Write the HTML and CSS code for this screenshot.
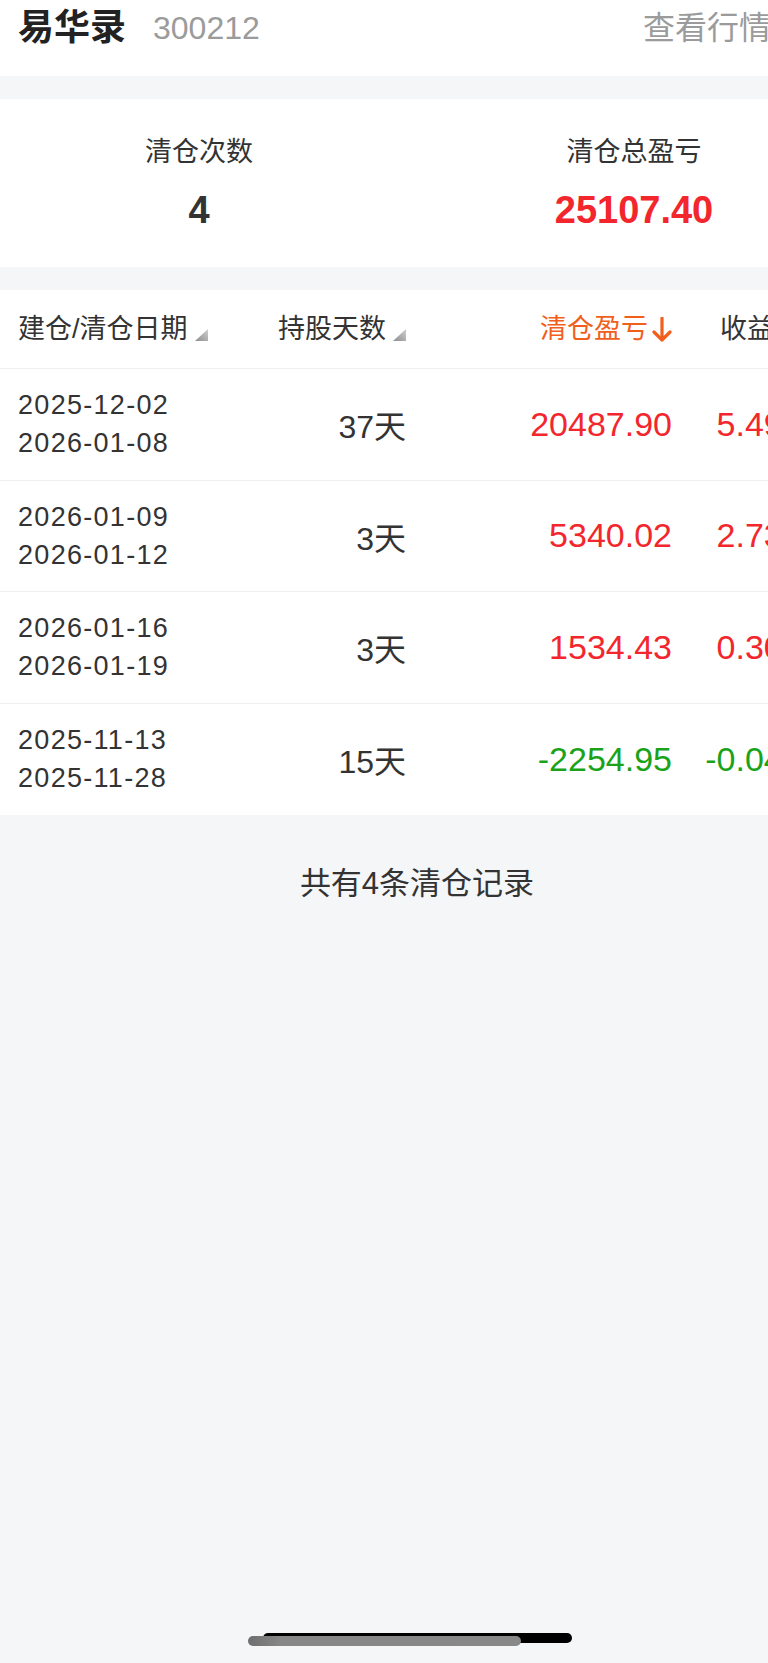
FILE: index.html
```html
<!DOCTYPE html>
<html>
<head>
	<title>清仓记录</title>
	<meta charset="utf-8">
	<link rel="stylesheet" href="styles.css">
</head>
<body>
	<div class="page">
		<div class="head">
			<span class="name">易华录</span>
			<span class="code">300212</span>
			<span class="quote">查看行情</span>
		</div>

		<div class="stats">
			<div class="stat stat-count">
				<div class="stat-label">清仓次数</div>
				<div class="stat-value">4</div>
			</div>
			<div class="stat-line"></div>
			<div class="stat stat-total">
				<div class="stat-label">清仓总盈亏</div>
				<div class="stat-value up">25107.40</div>
			</div>
		</div>

		<div class="table">
			<div class="row row-head">
				<div class="c-date">建仓/清仓日期<svg class="sort" width="13" height="12" viewBox="0 0 13 12"><defs><linearGradient id="tg" x1="0" y1="1" x2="1" y2="0"><stop offset="0" stop-color="#8c8c8c"/><stop offset="1" stop-color="#d0d0d0"/></linearGradient></defs><polygon points="0,12 13,0 13,12" fill="url(#tg)"/></svg></div>
				<div class="c-days">持股天数<svg class="sort" width="13" height="12" viewBox="0 0 13 12"><polygon points="0,12 13,0 13,12" fill="url(#tg)"/></svg></div>
				<div class="c-pl active">清仓盈亏<svg class="down" width="20" height="25" viewBox="0 0 20 25"><path d="M10 1 V23 M2 15 L10 23 L18 15" fill="none" stroke="#f0601c" stroke-width="3.2" stroke-linecap="round" stroke-linejoin="round"/></svg></div>
				<div class="c-rate">收益率<svg class="sort" width="13" height="12" viewBox="0 0 13 12"><polygon points="0,12 13,0 13,12" fill="url(#tg)"/></svg></div>
			</div>
			<div class="row">
				<div class="c-date"><div>2025-12-02</div><div>2026-01-08</div></div>
				<div class="c-days">37天</div>
				<div class="c-pl up">20487.90</div>
				<div class="c-rate up">5.49%</div>
			</div>
			<div class="row">
				<div class="c-date"><div>2026-01-09</div><div>2026-01-12</div></div>
				<div class="c-days">3天</div>
				<div class="c-pl up">5340.02</div>
				<div class="c-rate up">2.73%</div>
			</div>
			<div class="row">
				<div class="c-date"><div>2026-01-16</div><div>2026-01-19</div></div>
				<div class="c-days">3天</div>
				<div class="c-pl up">1534.43</div>
				<div class="c-rate up">0.30%</div>
			</div>
			<div class="row">
				<div class="c-date"><div>2025-11-13</div><div>2025-11-28</div></div>
				<div class="c-days">15天</div>
				<div class="c-pl down-c">-2254.95</div>
				<div class="c-rate down-c">-0.04%</div>
			</div>
		</div>

		<div class="note">共有4条清仓记录</div>
	</div>

	<div class="home-bar">
		<span class="bar-dark"></span>
		<span class="bar-gray"></span>
	</div>
</body>
</html>
```

FILE: styles.css
```css
*{
	margin:0;
	padding:0;
	box-sizing:border-box;
}
html,body{
	overflow:hidden;
}
body{
	background:#f5f6f8;
	min-height:100vh;
	font-family:"Liberation Sans","Noto Sans CJK SC",sans-serif;
	color:#333;
}
.page{
	width:834px;
}

/* top bar */
.head{
	height:76px;
	background:#fff;
	display:flex;
	align-items:center;
	padding:0 0 20px 18px;
}
.name{
	font-size:36px;
	font-weight:bold;
	color:#222;
	line-height:56px;
}
.code{
	font-size:32px;
	color:#9b9b9b;
	margin-left:27px;
	line-height:56px;
}
.quote{
	font-size:32px;
	color:#9b9b9b;
	margin-left:auto;
	margin-right:63px;
	line-height:56px;
}

/* summary */
.stats{
	margin-top:23px;
	height:168px;
	background:#fff;
	display:flex;
	align-items:center;
}
.stat{
	text-align:center;
	flex:none;
}
.stat-count{
	width:398px;
}
.stat-total{
	width:434px;
}
.stat-line{
	width:1px;
	height:104px;
	background:#efefef;
	margin-left:19px;
}
.stat-label{
	font-size:27px;
	line-height:36px;
	color:#333;
}
.stat-value{
	font-size:38px;
	font-weight:bold;
	line-height:46px;
	margin-top:17px;
	color:#333;
}
.up{
	color:#f2262c;
}
.down-c{
	color:#1aa31a;
}

/* table */
.table{
	margin-top:23px;
	background:#fff;
}
.row{
	display:grid;
	grid-template-columns:250px 138px 266px 141px;
	padding-left:18px;
	height:111.5px;
	align-items:center;
	border-bottom:1px solid #f0f0f0;
}
.row:last-child{
	border-bottom:none;
}
.row-head{
	height:79px;
}
.row-head > div{
	display:flex;
	align-items:center;
	font-size:27px;
	line-height:36px;
	letter-spacing:0;
	white-space:nowrap;
}
.row-head .c-days,
.row-head .c-pl{
	justify-content:flex-end;
}
.row-head .c-rate{
	padding-left:48px;
}
.sort{
	margin:11px 0 0 7px;
	flex:none;
}
.down{
	margin-left:4px;
	flex:none;
}
.row-head .active{
	color:#f0601c;
}
.c-date{
	font-size:27px;
	line-height:38px;
	letter-spacing:1.3px;
	color:#333;
}
.c-days{
	text-align:right;
	font-size:32px;
	color:#333;
}
.c-pl,
.c-rate{
	text-align:right;
	font-size:34px;
	white-space:nowrap;
}

.note{
	text-align:center;
	font-size:31px;
	color:#333;
	margin-top:49px;
	line-height:40px;
}

/* iOS home indicator */
.home-bar{
	position:absolute;
	left:0;
	top:1633px;
	width:768px;
	height:14px;
}
.bar-dark{
	position:absolute;
	left:263px;
	top:0;
	width:309px;
	height:10px;
	border-radius:5px;
	background:#000;
}
.bar-gray{
	position:absolute;
	left:248px;
	top:3px;
	width:273px;
	height:10px;
	border-radius:5px;
	background:linear-gradient(to right,#6e6e6e,#878787 12%,#888);
}
```
